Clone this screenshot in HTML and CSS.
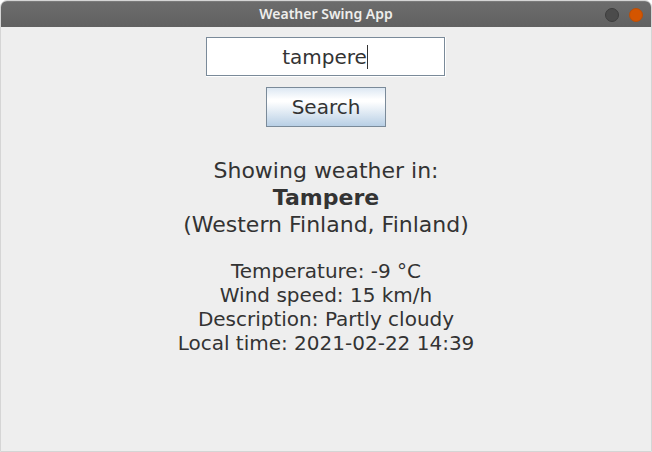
FILE: index.html
```html
<!DOCTYPE html>
<html lang="en">
<head>
<meta charset="utf-8">
<title>Weather Swing App</title>
<link rel="stylesheet" href="styles.css">
</head>
<body>
<div class="window">
  <header class="titlebar">
    <h1 class="title">Weather Swing App</h1>
    <div class="controls">
      <button class="control" type="button" aria-label="Minimize"></button>
      <button class="control close" type="button" aria-label="Close"></button>
    </div>
  </header>
  <main class="content">
    <form class="search">
      <div class="field">
        <input class="city" type="text" value="tampere" aria-label="City">
        <span class="caret"></span>
      </div>
      <button class="submit" type="button">Search</button>
    </form>
    <section class="place">
      <p>Showing weather in:</p>
      <p><strong>Tampere</strong></p>
      <p>(Western Finland, Finland)</p>
    </section>
    <section class="details">
      <p>Temperature: -9 °C</p>
      <p>Wind speed: 15 km/h</p>
      <p>Description: Partly cloudy</p>
      <p>Local time: 2021-02-22 14:39</p>
    </section>
  </main>
</div>
</body>
</html>
```
FILE: styles.css
```css
* {
  box-sizing: border-box;
}

body {
  margin: 0;
  background: #fff;
  color: #333;
  font-family: "DejaVu Sans", sans-serif;
}

p {
  margin: 0;
}

.window {
  display: flex;
  flex-direction: column;
  min-height: 100vh;
  border: 1px solid #d5d5d5;
  border-radius: 7px 7px 0 0;
  background: #eee;
  overflow: hidden;
}

.titlebar {
  display: grid;
  grid-template-columns: 1fr auto 1fr;
  align-items: center;
  height: 26px;
  padding: 0 8px;
  border-top: 1px solid #7b7b7b;
  background: linear-gradient(#6c6c6c, #616161);
}

.title {
  grid-column: 2;
  margin: 0;
  padding-bottom: 1px;
  color: #eeeeec;
  font: 600 14px/20px "Noto Sans", sans-serif;
}

.controls {
  display: flex;
  justify-content: flex-end;
  gap: 10px;
}

.control {
  width: 14px;
  height: 14px;
  padding: 0;
  border: 1px solid #3d3d3d;
  border-radius: 50%;
  background: #4b4b4b;
}

.control.close {
  border-color: #b94e08;
  background: #d45500;
}

.content {
  display: flex;
  flex-direction: column;
  align-items: center;
  padding-top: 10px;
  text-align: center;
}

.search {
  display: flex;
  flex-direction: column;
  align-items: center;
  gap: 10px;
}

.field {
  position: relative;
  border: solid #fff;
  border-width: 0 1px 1px 0;
}

.city {
  display: block;
  width: 239px;
  height: 39px;
  padding: 0 2px 0 0;
  border: 1px solid #7a8a99;
  border-radius: 0;
  background: #fff;
  color: #333;
  font: 20px/24px "DejaVu Sans", sans-serif;
  text-align: center;
  outline: none;
}

.caret {
  position: absolute;
  top: 8px;
  left: calc(50% + 41px);
  width: 1px;
  height: 24px;
  background: #333;
}

.submit {
  width: 120px;
  height: 40px;
  padding: 0;
  border: 1px solid #7a8a99;
  border-radius: 0;
  background: linear-gradient(#dde8f3, #fff 30%, #fff 36%, #b8cfe5);
  color: #333;
  font: 20px/24px "DejaVu Sans", sans-serif;
}

.place {
  margin-top: 30px;
  font-size: 22px;
  line-height: 27px;
}

.details {
  margin-top: 21px;
  font-size: 20px;
  line-height: 24px;
}
```
